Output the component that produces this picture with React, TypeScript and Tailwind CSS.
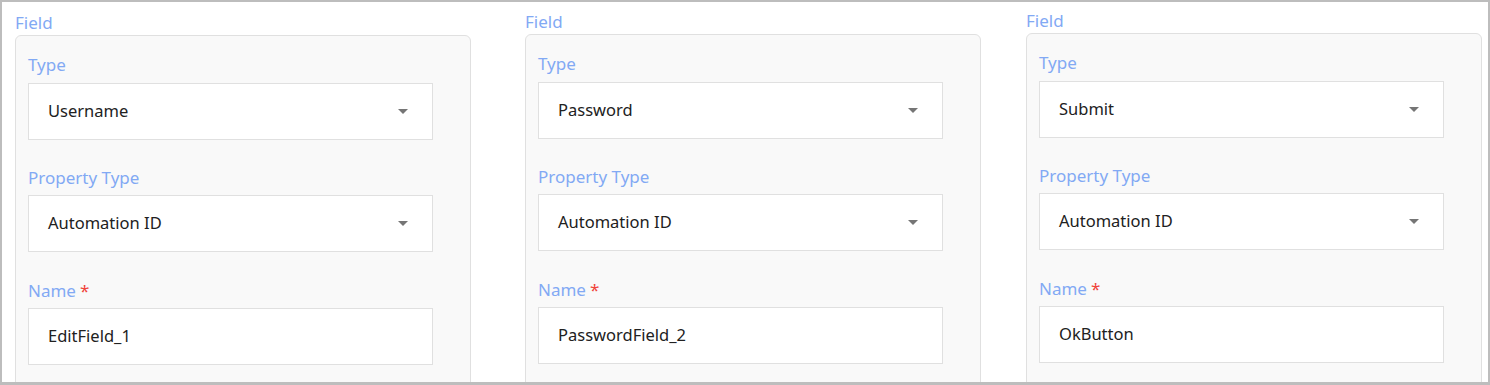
import React from "react";

type Row = { label: string; value: string; select?: boolean; required?: boolean };

const columns: { rows: Row[]; className: string }[] = [
  {
    className: "ml-[13px] pt-[11px]",
    rows: [
      { label: "Type", value: "Username", select: true },
      { label: "Property Type", value: "Automation ID", select: true },
      { label: "Name", value: "EditField_1", required: true },
    ],
  },
  {
    className: "ml-[54px] pt-[10px]",
    rows: [
      { label: "Type", value: "Password", select: true },
      { label: "Property Type", value: "Automation ID", select: true },
      { label: "Name", value: "PasswordField_2", required: true },
    ],
  },
  {
    className: "ml-[45px] pt-[9px]",
    rows: [
      { label: "Type", value: "Submit", select: true },
      { label: "Property Type", value: "Automation ID", select: true },
      { label: "Name", value: "OkButton", required: true },
    ],
  },
];

// spacing above each row, and between label and box
const rowGap = ["", "mt-[28px]", "mt-[29px]"];
const boxGap = ["mt-[8px]", "mt-[7px]", "mt-[7px]"];

const Caret = () => (
  <svg width="10" height="5" viewBox="0 0 10 5" className="shrink-0">
    <path d="M0 0h10L5 5z" fill="#757575" />
  </svg>
);

const FieldRow = ({ row, index }: { row: Row; index: number }) => {
  return (
    <div className={rowGap[index]}>
      <div className="h-[20px] text-[17px] leading-[20px] text-[#82a9f4]">
        {row.label}
        {row.required && <span className="ml-[4px] text-[#f0443a]">*</span>}
      </div>
      <div
        className={`${boxGap[index]} flex h-[57px] w-[405px] items-center justify-between border border-[#e0e0e0] bg-white pl-[19px] pr-[24px] text-[16.5px] text-[#212121]`}
      >
        <span>{row.value}</span>
        {row.select && <Caret />}
      </div>
    </div>
  );
};

const App = () => {
  return (
    <div
      className="h-[385px] w-[1490px] overflow-hidden border-2 border-b-[3px] border-[#bdbdbd] bg-white"
      style={{ fontFamily: '"Noto Sans", "Open Sans", sans-serif' }}
    >
      <div className="flex">
        {columns.map((col, i) => (
          <div key={i} className={col.className}>
            <div className="mb-[2px] h-[20px] text-[17px] leading-[20px] text-[#82a9f4]">Field</div>
            <div className="h-[400px] w-[456px] rounded-[6px] border border-[#e0e0e0] bg-[#f9f9f9] pl-[12px] pt-[19px]">
              {col.rows.map((row, j) => (
                <FieldRow key={j} row={row} index={j} />
              ))}
            </div>
          </div>
        ))}
      </div>
    </div>
  );
};

export default App;
